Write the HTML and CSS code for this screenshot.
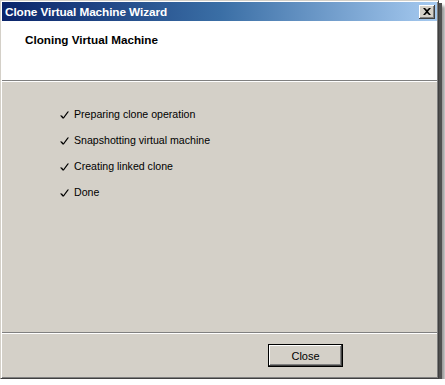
FILE: index.html
```html
<!DOCTYPE html>
<html lang="en">
<head>
    <meta charset="UTF-8">
    <title>Clone Virtual Machine Wizard</title>
    <link rel="stylesheet" href="styles.css">
</head>
<body>
    <div class="window">
        <div class="title-bar">
            <span class="title-text">Clone Virtual Machine Wizard</span>
            <button class="title-close" aria-label="Close">
                <svg width="8" height="7" viewBox="0 0 8 7">
                    <path d="M0 0h2l2 2 2-2h2L5 3.5 8 7H6L4 5 2 7H0l3-3.5z" fill="#000"/>
                </svg>
            </button>
        </div>

        <div class="header">
            <div class="header-title">Cloning Virtual Machine</div>
        </div>
        <div class="separator"></div>

        <div class="content">
            <ul class="steps">
                <li class="step"><span class="check"></span>Preparing clone operation</li>
                <li class="step"><span class="check"></span>Snapshotting virtual machine</li>
                <li class="step"><span class="check"></span>Creating linked clone</li>
                <li class="step"><span class="check"></span>Done</li>
            </ul>
        </div>

        <div class="separator"></div>
        <div class="footer">
            <button class="btn">Close</button>
        </div>
    </div>

    <script>
        // same tick for every finished step
        document.querySelectorAll('.check').forEach(el => {
            el.innerHTML = '<svg width="9" height="8" viewBox="0 0 9 8"><path d="M0 4.5h2l1.3 1.8L7.5 0.5H9L3.8 7.5H2.6z" fill="#000"/></svg>';
        });
    </script>
</body>
</html>
```

FILE: styles.css
```css
body {
    margin: 0;
    background-color: #fff;
    font-family: 'Liberation Sans', Arial, sans-serif;
    font-size: 11px;
    color: #000;
}

.window {
    width: 435px;
    height: 375px;
    display: flex;
    flex-direction: column;
    background-color: #d4d0c8;
    border-left: 1px solid #d4d0c8;
    border-top: 1px solid #d4d0c8;
    border-right: 1px solid #404040;
    border-bottom: 1px solid #404040;
    box-shadow: inset 1px 1px 0 #fff, inset -1px -1px 0 #808080, 3px 3px 0 #505050, 6px 6px 3px rgba(0,0,0,0.4);
    padding: 1px;
}

.title-bar {
    height: 19px;
    flex-shrink: 0;
    display: flex;
    align-items: center;
    justify-content: space-between;
    padding: 0 2px 0 3px;
    background: linear-gradient(to right, #0a246a 0%, #3a6ea5 50%, #a6caf0 100%);
}

.title-text {
    color: #fff;
    font-weight: bold;
    font-size: 11.8px;
    letter-spacing: -0.1px;
}

.title-close {
    width: 16px;
    height: 14px;
    padding: 0;
    display: flex;
    align-items: center;
    justify-content: center;
    background-color: #d4d0c8;
    border: none;
    box-shadow: inset -1px -1px 0 #404040, inset 1px 1px 0 #fff, inset -2px -2px 0 #808080;
}

.header {
    height: 59px;
    flex-shrink: 0;
    background-color: #fff;
    padding: 12px 0 0 23px;
    box-sizing: border-box;
}

.header-title {
    font-weight: bold;
    font-size: 11.7px;
}

.separator {
    height: 1px;
    flex-shrink: 0;
    background-color: #808080;
    border-bottom: 1px solid #fff;
}

.content {
    flex: 1;
    padding: 25px 0 0 58px;
}

.steps {
    list-style: none;
    margin: 0;
    padding: 0;
    display: flex;
    flex-direction: column;
    gap: 12px;
}

.step {
    display: flex;
    align-items: center;
    height: 14px;
    font-size: 10.6px;
}

.check {
    width: 14px;
    display: flex;
    align-items: center;
    margin-top: 2px;
}

.footer {
    height: 43px;
    flex-shrink: 0;
    display: flex;
    justify-content: flex-end;
    align-items: flex-start;
    padding: 10px 94px 0 0;
    box-sizing: border-box;
}

.btn {
    width: 75px;
    height: 23px;
    font-family: 'Liberation Sans', Arial, sans-serif;
    font-size: 11px;
    color: #000;
    background-color: #d4d0c8;
    border: 1px solid #000;
    box-shadow: inset -1px -1px 0 #404040, inset 1px 1px 0 #fff, inset -2px -2px 0 #808080;
    padding: 0;
}
```
